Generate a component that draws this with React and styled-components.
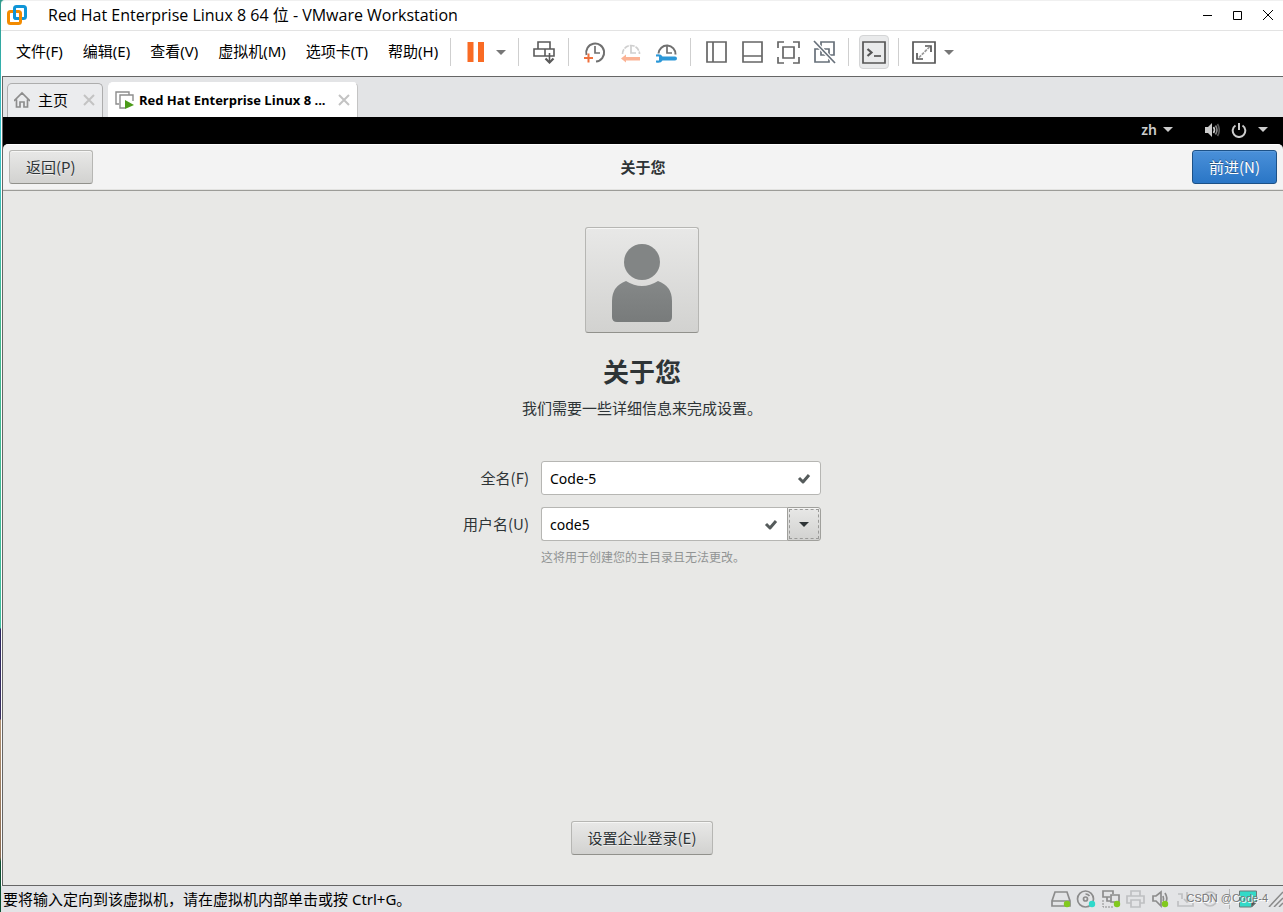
import React from "react";
import styled, { createGlobalStyle, css } from "styled-components";

const uiFont = `"Noto Sans", "Noto Sans CJK SC", sans-serif`;
const guestFont = `"Noto Sans CJK SC", "Noto Sans", sans-serif`;

const GlobalStyle = createGlobalStyle`
  * {
    box-sizing: border-box;
  }
  body {
    margin: 0;
    background: #fff;
    font-family: ${uiFont};
    color: #000;
  }
  button, input {
    font: inherit;
    color: inherit;
  }
  svg {
    display: block;
    flex: none;
  }
`;

/* ---------- window frame ---------- */

const Desktop = styled.div`
  min-height: 100vh;
  display: flex;
  padding-left: 1px;
  background: linear-gradient(
    #2f9a8c 0,
    #38c6cf 15%,
    #43b88c 35%,
    #3fc0a0 68.8%,
    #2b2560 69%,
    #3a3060 78.8%,
    #b09070 79%,
    #8a6a50 94%,
    #0b5030 94.5%
  );
`;

const Window = styled.div`
  flex: 1;
  min-width: 0;
  display: flex;
  flex-direction: column;
  background: #fff;
  border-top: 1px solid #f0f0f0;
  border-top-left-radius: 4px;
`;

const TitleBar = styled.header`
  height: 30px;
  display: flex;
  align-items: center;
  padding: 0 9px 1px 5px;
  border-bottom: 1px solid #e3e3e3;
`;

const WindowTitle = styled.h1`
  flex: 1;
  margin: 0 0 0 20px;
  font-family: "Open Sans", "Noto Sans CJK SC", sans-serif;
  font-size: 16px;
  line-height: 20px;
  font-weight: 400;
`;

const WindowButtons = styled.div`
  display: flex;
  gap: 18px;
`;

const PlainButton = styled.button`
  display: flex;
  padding: 0;
  border: 0;
  background: none;
`;

const Toolbar = styled.div`
  height: 45px;
  display: flex;
  align-items: center;
  padding: 0 15px 3px;
`;

const Menu = styled.nav`
  display: flex;
  gap: 20px;
  padding-bottom: 2px;
`;

const MenuItem = styled.button`
  padding: 0;
  border: 0;
  background: none;
  font-size: 15px;
  line-height: 20px;
  white-space: nowrap;
`;

const Tools = styled.div`
  display: flex;
  align-items: center;
  gap: 12px;
`;

const ToolSeparator = styled.span`
  flex: none;
  width: 1px;
  height: 28px;
  margin: 0 13px 0 12px;
  background: #cfcfcf;
`;

const SplitTool = styled.div`
  display: flex;
  align-items: center;
  gap: 8px;
`;

const ToolButton = styled(PlainButton)`
  ${({ $active }) =>
    $active &&
    css`
      margin: 0 -3px;
      padding: 4px 2px;
      border: 1px solid #d4d5d6;
      border-radius: 4px;
      background: #e9eaeb;
    `}
`;

const Body = styled.div`
  flex: 1;
  display: flex;
  flex-direction: column;
  margin-left: 1px;
  border: solid #666;
  border-width: 1px 0 1px 1px;
`;

const TabStrip = styled.div`
  height: 40px;
  display: flex;
  align-items: flex-end;
  gap: 5px;
  padding: 0 4px;
  background: #e3e4e6;
`;

const Tab = styled.div`
  height: ${({ $active }) => ($active ? 35 : 34)}px;
  width: ${({ $active }) => ($active ? 250 : 96)}px;
  display: flex;
  align-items: center;
  padding: 0 7px 1px 6px;
  border: 1px solid ${({ $active }) => ($active ? "#c4c4c4" : "#adadad")};
  border-bottom: 0;
  border-left-color: ${({ $active }) => ($active ? "#fff" : "#adadad")};
  border-top-color: ${({ $active }) => ($active ? "#fff" : "#adadad")};
  border-radius: 5px 5px 0 0;
  background: ${({ $active }) => ($active ? "#fff" : "#ebecee")};
`;

const TabLabel = styled.button`
  flex: 1;
  display: flex;
  align-items: center;
  gap: ${({ $active }) => ($active ? 5 : 8)}px;
  padding: 0;
  border: 0;
  background: none;
  white-space: nowrap;
  font-family: "Open Sans", "Noto Sans CJK SC", sans-serif;
  font-size: ${({ $active }) => ($active ? 13 : 15)}px;
  line-height: 20px;
  font-weight: ${({ $active }) => ($active ? 700 : 400)};
`;

/* ---------- guest screen ---------- */

const Guest = styled.main`
  flex: 1;
  display: flex;
  flex-direction: column;
  background: #000;
  color: #2e3436;
  font-family: ${guestFont};
  font-size: 15px;
`;

const TopBar = styled.div`
  height: 27px;
  display: flex;
  align-items: center;
  justify-content: flex-end;
  padding: 0 15px 2px 0;
  color: #ccc;
`;

const Language = styled.button`
  display: flex;
  align-items: center;
  gap: 6px;
  margin-right: 31px;
  padding: 0;
  border: 0;
  background: none;
  font-family: "Noto Sans", sans-serif;
  font-size: 14px;
  line-height: 20px;
  font-weight: 600;
`;

const SystemMenu = styled(PlainButton)`
  align-items: center;
  gap: 11px;
`;

const HeaderBar = styled.header`
  height: 47px;
  display: grid;
  grid-template-columns: 1fr auto 1fr;
  align-items: center;
  padding: 0 6px 2px;
  border-top: 1px solid #fff;
  border-bottom: 1px solid #9c9c98;
  border-radius: 5px 5px 0 0;
  background: #f3f3f3;
  box-shadow: inset 0 -1px #e2e2e0;
`;

const HeaderTitle = styled.h2`
  margin: 0;
  font-size: 15px;
  line-height: 22px;
  font-weight: 700;
`;

const Button = styled.button`
  justify-self: ${({ $end }) => ($end ? "end" : "start")};
  height: 34px;
  padding: 0 16px;
  border: 1px solid #b6b6b3;
  border-bottom-color: #91918c;
  border-radius: 3px;
  background: linear-gradient(#e8e8e7, #d2d2d0);
  box-shadow: inset 0 1px #f6f6f5;
  line-height: 22px;
  text-shadow: 0 1px #eee;
  white-space: nowrap;

  ${({ $primary }) =>
    $primary &&
    css`
      border-color: #1c5187;
      background: linear-gradient(#4a90d9, #2a76c6);
      box-shadow: inset 0 1px #5b9bdd;
      color: #fff;
      text-shadow: 0 -1px rgba(0, 0, 0, 0.4);
    `}
`;

const Page = styled.section`
  flex: 1;
  display: flex;
  flex-direction: column;
  align-items: center;
  padding: 36px 2px 30px 0;
  background: #e8e8e6;
`;

const AvatarButton = styled(Button)`
  width: 114px;
  height: 106px;
  display: flex;
  align-items: center;
  justify-content: center;
  padding-top: 6px;
`;

const PageTitle = styled.h3`
  margin: 19px 0 0;
  font-size: 26px;
  line-height: 38px;
  font-weight: 700;
`;

const PageText = styled.p`
  margin: 7px 0 0;
  line-height: 22px;
`;

const Form = styled.form`
  display: grid;
  grid-template-columns: auto 280px;
  gap: 12px;
  align-items: center;
  margin-top: 42px;
`;

const Label = styled.label`
  text-align: right;
  line-height: 22px;
`;

const Combo = styled.div`
  display: flex;
`;

const Field = styled.div`
  flex: 1;
  height: 34px;
  display: flex;
  align-items: center;
  padding: 0 8px;
  border: 1px solid #b6b6b3;
  border-radius: ${({ $joined }) => ($joined ? "3px 0 0 3px" : "3px")};
  border-right-width: ${({ $joined }) => ($joined ? 0 : 1)}px;
  background: #fff;
`;

const TextInput = styled.input`
  flex: 1;
  min-width: 0;
  padding: 2px 0 0;
  border: 0;
  outline: 0;
  background: none;
  color: #000;
  font-family: "Noto Sans", sans-serif;
  font-size: 14px;
  line-height: 22px;
`;

const ComboButton = styled(Button)`
  width: 34px;
  display: flex;
  align-items: center;
  justify-content: center;
  padding: 0;
  border-color: #a0a09c;
  border-radius: 0 3px 3px 0;
  outline: 1px dashed #9a9a98;
  outline-offset: -3px;
`;

const Hint = styled.p`
  grid-column: 2;
  margin: -6px 0 0;
  color: #919494;
  font-size: 12px;
  line-height: 20px;
`;

const PageFooter = styled.div`
  margin-top: auto;
`;

/* ---------- status bar ---------- */

const StatusBar = styled.footer`
  height: 26px;
  display: flex;
  align-items: center;
  background: #e3e4e6;
  font-size: 15px;
`;

const StatusText = styled.span`
  flex: 1;
  padding-left: 2px;
  line-height: 20px;
  white-space: nowrap;
`;

const Devices = styled.div`
  position: relative;
  display: flex;
  align-items: center;
  align-self: stretch;
  gap: 5px;
  padding-right: 10px;
`;

const StatusSeparator = styled.span`
  width: 1px;
  height: 20px;
  margin: 0 3px;
  background: #b5b5b5;
`;

const Watermark = styled.span`
  position: absolute;
  right: 0;
  top: 4px;
  color: #777;
  font-family: "Liberation Sans", sans-serif;
  font-size: 11px;
  line-height: 16px;
  text-shadow: 1px 1px #fff;
  white-space: nowrap;
`;

/* ---------- icons ---------- */

const Icon = ({ w = 24, h = w, color = "#666", stroke = 1.7, children }) => (
  <svg
    width={w}
    height={h}
    viewBox={`0 0 ${w} ${h}`}
    fill="none"
    stroke={color}
    strokeWidth={stroke}
    aria-hidden="true"
  >
    {children}
  </svg>
);

const Caret = ({ color = "#777", w = 10 }) => (
  <svg width={w} height="5" viewBox="0 0 10 5" fill={color} aria-hidden="true">
    <path d="M0 0h10L5 5z" />
  </svg>
);

const LogoIcon = () => (
  <Icon w={22} stroke={3}>
    <rect x="8.500" y="2.500" width="11" height="12" rx="2" stroke="#0f95d7" />
    <rect x="2.500" y="7.500" width="12" height="12" rx="2" stroke="#f38b00" />
    <path d="M8.500 6v6.500a2 2 0 0 0 2 2H13" stroke="#0f95d7" />
  </Icon>
);

const PauseIcon = () => (
  <Icon>
    <path d="M3.500 2h6v20h-6zM14 2h6v20h-6z" fill="#f96b24" stroke="none" />
  </Icon>
);

const SendKeysIcon = () => (
  <Icon color="#5a5a5a" stroke={1.6}>
    <path d="M6 2h12v7H6zM2 9h20v7H2zM13 9v7" />
    <path d="M17.500 13v9" />
    <path d="M13.500 18.500l4 4 4-4" strokeWidth="2.200" />
  </Icon>
);

const SnapshotIcon = () => (
  <Icon>
    <path d="M4.500 15A9 9 0 1 1 14 21.500" stroke="#707070" strokeWidth="2" />
    <path d="M13 6v7h5" stroke="#707070" />
    <path d="M2 18h9M6.500 13.500v9" stroke="#f0703c" strokeWidth="2" />
  </Icon>
);

const RevertIcon = () => (
  <Icon>
    <path d="M4.500 14a8.500 8.500 0 0 1 17 0" stroke="#cfcfcf" strokeDasharray="5 1" />
    <path d="M13 6v7h5" stroke="#cfcfcf" />
    <path d="M3 18.500l5-4v2.500h14v3.500H8v2z" fill="#fbb395" stroke="none" />
  </Icon>
);

const ManageIcon = () => (
  <Icon>
    <path d="M4.500 13.500a8.500 8.500 0 1 1 17 1" stroke="#707070" strokeWidth="2" />
    <path d="M13 6v7h5" stroke="#707070" />
    <path
      d="M2 14.500q5-1 6.500 2H21a2 2 0 0 1 0 4H8.500Q7 23.500 2 22.500v-2h3v-4H2z"
      fill="#2c98d8"
      stroke="none"
    />
  </Icon>
);

const LibraryIcon = () => (
  <Icon>
    <path d="M3 2h19v20H3zM9 2v20" />
  </Icon>
);

const ThumbnailIcon = () => (
  <Icon>
    <path d="M3 2h19v20H3zM3 16h19" />
  </Icon>
);

const FullScreenIcon = () => (
  <Icon>
    <path d="M2 8V2h6M17 2h6v6M23 17v6h-6M8 23H2v-6M7 7h11v11H7z" />
  </Icon>
);

const UnityIcon = () => (
  <Icon color="#67707a">
    <path d="M9 8V2h13v13h-5M12 9h5v13H3V9h6M9 8v7h6" />
    <path d="M2 1l21 22" stroke="#fff" strokeWidth="4" />
    <path d="M2 1l21 22" />
  </Icon>
);

const ConsoleIcon = () => (
  <Icon color="#555">
    <path d="M1 2h22v21H1z" />
    <path d="M5.500 9l4 3.500-4 3.500" strokeWidth="2.200" />
    <path d="M12 16h7" />
  </Icon>
);

const StretchIcon = () => (
  <Icon color="#555">
    <path d="M1 2h22v21H1z" />
    <path d="M13 6h6v6M11 19H5v-6" />
    <path d="M7 17.500L17.500 7" stroke="#999" strokeDasharray="3 1" />
  </Icon>
);

const HomeIcon = () => (
  <Icon w={16} h={18} color="#8d8d8d">
    <path d="M0 10l8-8 8 8M2.500 8.500V16H6v-5h4v5h3.500V8.500" />
  </Icon>
);

const VmIcon = () => (
  <Icon w={19} h={18} color="#8d8d8d" stroke={1.4}>
    <path d="M4 13H1V1h13v3" />
    <path d="M10 17H5V4h13v6" />
    <path d="M10 9l9 5-9 4z" fill="#4b9b18" stroke="none" />
  </Icon>
);

const CloseIcon = ({ color = "#c3c3c3", w = 12, stroke = 2 }) => (
  <Icon w={w} color={color} stroke={stroke}>
    <path d={`M1 1l${w - 2} ${w - 2}M${w - 1} 1L1 ${w - 1}`} />
  </Icon>
);

const MinimizeIcon = () => (
  <Icon w={12} color="#000" stroke={1}>
    <path d="M1 6.500h9" />
  </Icon>
);

const MaximizeIcon = () => (
  <Icon w={12} color="#000" stroke={1}>
    <path d="M1.500 2.500h8v8h-8z" />
  </Icon>
);

const VolumeIcon = () => (
  <Icon w={16} color="#ccc" stroke={1.6}>
    <path d="M1 5h3l4-4v14l-4-4H1z" fill="#ccc" stroke="none" />
    <path d="M9.500 5q2 3 0 6" />
    <path d="M11.500 3.500q3 4.500 0 9" stroke="#888" />
    <path d="M13.500 2q3.500 6 0 12" stroke="#555" />
  </Icon>
);

const PowerIcon = () => (
  <Icon w={16} color="#ccc" stroke={2}>
    <path d="M4.500 3.500a6.300 6.300 0 1 0 7 0M8 1v7" />
  </Icon>
);

const AvatarIcon = () => (
  <svg width="62" height="80" viewBox="0 0 62 80" aria-hidden="true">
    <linearGradient id="person" x1="0" y1="0" x2="0" y2="1">
      <stop offset="0" stopColor="#858888" />
      <stop offset="1" stopColor="#787b7b" />
    </linearGradient>
    <path
      d="M15 38q16 10 32 0 14 5 14 20v16q0 5-5 5H6q-5 0-5-5V58q0-15 14-20z"
      fill="url(#person)"
    />
    <circle cx="31" cy="19" r="18" fill="#828585" />
  </svg>
);

const CheckIcon = () => (
  <Icon w={16} color="#555b5b" stroke={3}>
    <path d="M3 8l4 4 6-7" strokeLinejoin="round" />
  </Icon>
);

const Dot = ({ x = 16, y = 15, color = "#82c91e" }) => (
  <circle cx={x} cy={y} r="3.200" fill={color} stroke="none" />
);

const gray = "#8c8c8c";
const faint = "#bfc0c2";

const DiskIcon = () => (
  <Icon w={20} color={gray}>
    <path d="M4 3h12l3 9v5H1v-5zM1 12h18" />
    <Dot />
  </Icon>
);

const DiscIcon = () => (
  <Icon w={20} color={gray}>
    <circle cx="9.500" cy="10" r="8" />
    <circle cx="9.500" cy="10" r="2" />
    <path d="M9.500 5a5 5 0 0 1 4 2" />
    <Dot color="#2fd9cb" />
  </Icon>
);

const NetworkIcon = () => (
  <Icon w={20} color={gray}>
    <path d="M9 8H2V2h10v3M10 6h8v7h-8zM6 8v4h4" />
    <path d="M2 11v7h11" strokeWidth="1" strokeDasharray="2 1" />
    <Dot />
  </Icon>
);

const PrinterIcon = () => (
  <Icon w={20} color={faint}>
    <path d="M5 7V2h9v5M5 14H1V7h17v7h-4M5 11h9v7H5z" />
  </Icon>
);

const SoundIcon = () => (
  <Icon w={20} color={gray}>
    <path d="M2 7h3l5-4v14l-5-5H2zM12 7q1 3 0 5M14 4q3 5 1 9" />
    <Dot x={14} />
  </Icon>
);

const UsbIcon = () => (
  <Icon w={20} color={faint}>
    <path d="M2 12v5h15v-5M11 3v10M8 10l3 3 3-3M2 5h4v5" />
  </Icon>
);

const TimerIcon = () => (
  <Icon w={20} color={faint}>
    <circle cx="9" cy="10" r="7" />
    <path d="M9 6v8M6 10h6" />
  </Icon>
);

const NoteIcon = () => (
  <Icon w={20} color="#6a7b79" stroke={1}>
    <path d="M1.500 2h17v11l-5 5h-12z" fill="#32dac8" />
    <path d="M18.500 13h-5v5z" fill="#555" />
  </Icon>
);

const GripIcon = () => (
  <Icon w={15} h={16} color="#8a8a8a" stroke={1.5}>
    <path d="M1 16L15 1M6 16l9-9M11 16l4-4" />
  </Icon>
);

const menus = ["文件(F)", "编辑(E)", "查看(V)", "虚拟机(M)", "选项卡(T)", "帮助(H)"];

const devices = [
  DiskIcon,
  DiscIcon,
  NetworkIcon,
  PrinterIcon,
  SoundIcon,
  UsbIcon,
  TimerIcon,
];

function MainToolbar() {
  return (
    <Toolbar>
      <Menu>
        {menus.map((item) => (
          <MenuItem key={item}>{item}</MenuItem>
        ))}
      </Menu>
      <ToolSeparator />
      <SplitTool>
        <ToolButton aria-label="挂起"><PauseIcon /></ToolButton>
        <ToolButton aria-label="电源选项"><Caret /></ToolButton>
      </SplitTool>
      <ToolSeparator />
      <ToolButton aria-label="发送 Ctrl+Alt+Del"><SendKeysIcon /></ToolButton>
      <ToolSeparator />
      <Tools>
        <ToolButton aria-label="拍摄快照"><SnapshotIcon /></ToolButton>
        <ToolButton aria-label="恢复快照" disabled><RevertIcon /></ToolButton>
        <ToolButton aria-label="管理快照"><ManageIcon /></ToolButton>
      </Tools>
      <ToolSeparator />
      <Tools>
        <ToolButton aria-label="显示库"><LibraryIcon /></ToolButton>
        <ToolButton aria-label="显示缩略图栏"><ThumbnailIcon /></ToolButton>
        <ToolButton aria-label="全屏"><FullScreenIcon /></ToolButton>
        <ToolButton aria-label="Unity"><UnityIcon /></ToolButton>
      </Tools>
      <ToolSeparator />
      <ToolButton $active aria-label="控制台视图"><ConsoleIcon /></ToolButton>
      <ToolSeparator />
      <SplitTool>
        <ToolButton aria-label="自由拉伸"><StretchIcon /></ToolButton>
        <ToolButton aria-label="拉伸选项"><Caret /></ToolButton>
      </SplitTool>
    </Toolbar>
  );
}

function Tabs() {
  return (
    <TabStrip>
      <Tab>
        <TabLabel><HomeIcon />主页</TabLabel>
        <PlainButton aria-label="关闭"><CloseIcon /></PlainButton>
      </Tab>
      <Tab $active>
        <TabLabel $active><VmIcon />Red Hat Enterprise Linux 8 ...</TabLabel>
        <PlainButton aria-label="关闭"><CloseIcon /></PlainButton>
      </Tab>
    </TabStrip>
  );
}

function AccountPage() {
  return (
    <Page>
      <AvatarButton aria-label="头像"><AvatarIcon /></AvatarButton>
      <PageTitle>关于您</PageTitle>
      <PageText>我们需要一些详细信息来完成设置。</PageText>
      <Form>
        <Label htmlFor="fullname">全名(F)</Label>
        <Field>
          <TextInput id="fullname" defaultValue="Code-5" />
          <CheckIcon />
        </Field>
        <Label htmlFor="username">用户名(U)</Label>
        <Combo>
          <Field $joined>
            <TextInput id="username" defaultValue="code5" />
            <CheckIcon />
          </Field>
          <ComboButton type="button" aria-label="用户名建议">
            <Caret color="#2e3436" />
          </ComboButton>
        </Combo>
        <Hint>这将用于创建您的主目录且无法更改。</Hint>
      </Form>
      <PageFooter>
        <Button>设置企业登录(E)</Button>
      </PageFooter>
    </Page>
  );
}

function App() {
  return (
    <Desktop>
      <GlobalStyle />
      <Window>
        <TitleBar>
          <LogoIcon />
          <WindowTitle>Red Hat Enterprise Linux 8 64 位 - VMware Workstation</WindowTitle>
          <WindowButtons>
            <PlainButton aria-label="最小化"><MinimizeIcon /></PlainButton>
            <PlainButton aria-label="最大化"><MaximizeIcon /></PlainButton>
            <PlainButton aria-label="关闭"><CloseIcon color="#000" stroke={1} /></PlainButton>
          </WindowButtons>
        </TitleBar>
        <MainToolbar />
        <Body>
          <Tabs />
          <Guest>
            <TopBar>
              <Language>zh <Caret color="#ccc" /></Language>
              <SystemMenu aria-label="系统菜单">
                <VolumeIcon />
                <PowerIcon />
                <Caret color="#ccc" />
              </SystemMenu>
            </TopBar>
            <HeaderBar>
              <Button>返回(P)</Button>
              <HeaderTitle>关于您</HeaderTitle>
              <Button $end $primary>前进(N)</Button>
            </HeaderBar>
            <AccountPage />
          </Guest>
        </Body>
        <StatusBar>
          <StatusText>要将输入定向到该虚拟机，请在虚拟机内部单击或按 Ctrl+G。</StatusText>
          <Devices>
            {devices.map((Device, i) => (
              <Device key={i} />
            ))}
            <StatusSeparator />
            <NoteIcon />
            <Watermark>CSDN @Code-4</Watermark>
          </Devices>
          <GripIcon />
        </StatusBar>
      </Window>
    </Desktop>
  );
}

export default App;
